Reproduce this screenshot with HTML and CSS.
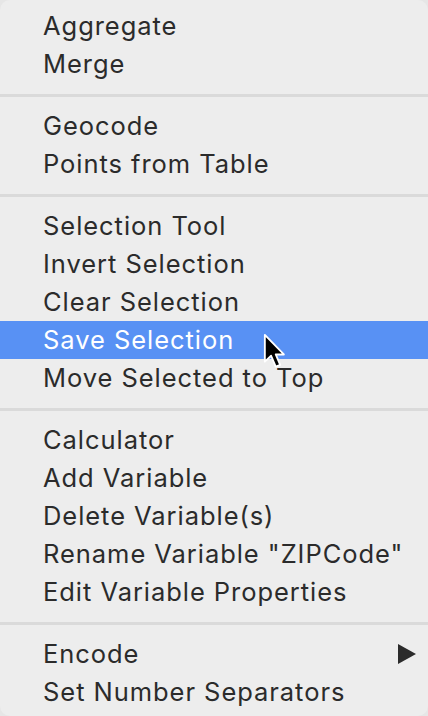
FILE: index.html
```html
<!DOCTYPE html>
<html>
<head>
<meta charset="utf-8">
<link rel="stylesheet" href="styles.css">
</head>
<body>
<div class="menu">
  <div class="item">Aggregate</div>
  <div class="item">Merge</div>
  <div class="sep"></div>
  <div class="item">Geocode</div>
  <div class="item">Points from Table</div>
  <div class="sep"></div>
  <div class="item">Selection Tool</div>
  <div class="item">Invert Selection</div>
  <div class="item">Clear Selection</div>
  <div class="item active">Save Selection
    <svg class="cursor" viewBox="0 0 13 20" width="24" height="37">
      <path d="M1 1 L1 15.5 L4.4 12.3 L6.9 18.2 L9.3 17.2 L6.9 11.6 L11.3 11.6 Z" fill="#000" stroke="#fff" stroke-width="1" stroke-linejoin="round"/>
    </svg>
  </div>
  <div class="item">Move Selected to Top</div>
  <div class="sep"></div>
  <div class="item">Calculator</div>
  <div class="item">Add Variable</div>
  <div class="item">Delete Variable(s)</div>
  <div class="item">Rename Variable "ZIPCode"</div>
  <div class="item">Edit Variable Properties</div>
  <div class="sep"></div>
  <div class="item sub">Encode <span class="arrow"></span></div>
  <div class="item">Set Number Separators</div>
</div>
</body>
</html>
```
FILE: styles.css
```css
html, body {
  margin: 0;
  padding: 0;
  background: #e6e6e6;
}
.menu {
  width: 428px;
  height: 716px;
  box-sizing: border-box;
  padding-top: 7px;
  background: #ededed;
  border-radius: 10px;
  display: flex;
  flex-direction: column;
  font-family: Inter, "Liberation Sans", sans-serif;
  font-size: 25.5px;
  letter-spacing: 0.95px;
  color: #2b2b2b;
  overflow: hidden;
}
.item {
  position: relative;
  height: 38px;
  line-height: 38px;
  padding-left: 43px;
  padding-right: 12px;
  display: flex;
  align-items: center;
  justify-content: space-between;
  white-space: nowrap;
}
.item.active {
  background: #5891f4;
  color: #ffffff;
}
.sep {
  height: 24px;
  display: flex;
  align-items: center;
}
.sep::before {
  content: "";
  display: block;
  width: 100%;
  height: 3px;
  background: #dadada;
}
.arrow {
  width: 0;
  height: 0;
  border-top: 10px solid transparent;
  border-bottom: 10px solid transparent;
  border-left: 18px solid #2b2b2b;
}
.cursor {
  position: absolute;
  left: 263px;
  top: 12px;
}
```
